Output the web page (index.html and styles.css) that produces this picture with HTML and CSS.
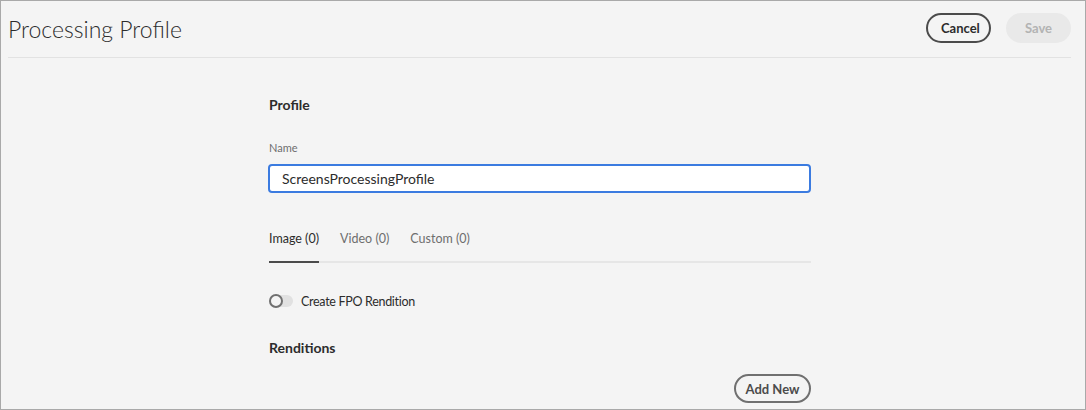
FILE: index.html
```html
<!DOCTYPE html>
<html>
<head>
<meta charset="utf-8">
<link rel="stylesheet" href="styles.css">
</head>
<body>
<div class="frame">
  <header class="header">
    <h1 class="title">Processing Profile</h1>
    <div class="actions">
      <button class="btn btn-outline">Cancel</button>
      <button class="btn btn-disabled">Save</button>
    </div>
  </header>
  <main class="content">
    <h2 class="section">Profile</h2>
    <label class="label">Name</label>
    <div class="input">ScreensProcessingProfile</div>
    <nav class="tabs">
      <span class="tab active">Image (0)</span>
      <span class="tab">Video (0)</span>
      <span class="tab">Custom (0)</span>
    </nav>
    <div class="toggle-row">
      <span class="switch"><span class="knob"></span></span>
      <span class="toggle-label">Create FPO Rendition</span>
    </div>
    <h2 class="section renditions">Renditions</h2>
    <div class="add-row">
      <button class="btn btn-secondary">Add New</button>
    </div>
  </main>
</div>
</body>
</html>
```
FILE: styles.css
```css
* { box-sizing: border-box; }
html, body { margin: 0; padding: 0; }
body {
  font-family: Lato, "Open Sans", sans-serif;
  color: #2c2c2c;
  background: #f4f4f4;
}
.frame {
  width: 1086px;
  height: 410px;
  border: 1px solid #a9a9a9;
  background: #f4f4f4;
  overflow: hidden;
}
.header {
  margin: 0 14px 0 7px;
  height: 57px;
  border-bottom: 1px solid #e2e2e2;
  display: flex;
  align-items: flex-start;
  justify-content: space-between;
}
.title {
  margin: 12px 0 0 0;
  font-size: 23px;
  font-weight: 300;
  color: #2c2c2c;
  line-height: 32px;
}
.actions {
  display: flex;
  gap: 15px;
  margin-top: 12px;
}
.btn {
  font-family: inherit;
  height: 30px;
  border-radius: 15px;
  font-size: 13px;
  font-weight: 700;
  padding: 0 13px;
  cursor: default;
}
.btn-outline {
  width: 65px;
  border: 2px solid #4b4b4b;
  background: transparent;
  color: #2c2c2c;
}
.btn-disabled {
  width: 65px;
  border: 2px solid #e9e9e9;
  background: #e9e9e9;
  color: #b3b3b3;
}
.btn-secondary {
  width: 77px;
  height: 29px;
  border: 2px solid #707070;
  background: transparent;
  color: #4b4b4b;
  padding: 0;
}
.content {
  width: 543px;
  margin-left: 267px;
  padding-top: 35px;
}
.section {
  margin: 0 0 0 1px;
  font-size: 14px;
  font-weight: 700;
  line-height: 24px;
  color: #2c2c2c;
}
.label {
  display: block;
  margin: 22px 0 0 1px;
  font-size: 11px;
  color: #6e6e6e;
  line-height: 18px;
}
.input {
  margin-top: 7px;
  height: 29px;
  border: 2px solid #3b7be0;
  border-radius: 4px;
  background: #fff;
  font-size: 14px;
  line-height: 25px;
  padding-left: 12px;
  color: #2c2c2c;
}
.tabs {
  margin-top: 31px;
  margin-left: 1px;
  display: flex;
  gap: 21px;
  border-bottom: 2px solid #e6e6e6;
  width: 542px;
}
.tab {
  font-size: 12.5px;
  color: #6e6e6e;
  line-height: 18px;
  padding: 6px 0 13px;
  margin-bottom: -2px;
}
.tab.active {
  color: #2c2c2c;
  border-bottom: 2px solid #4b4b4b;
}
.toggle-row {
  margin-top: 29px;
  margin-left: 1px;
  display: flex;
  align-items: center;
  gap: 8px;
  height: 18px;
}
.switch {
  width: 24px;
  height: 12px;
  border-radius: 6px;
  background: #e1e1e1;
  position: relative;
  display: inline-block;
}
.knob {
  position: absolute;
  left: 0;
  top: -1px;
  width: 14px;
  height: 14px;
  border-radius: 50%;
  background: #f4f4f4;
  border: 2px solid #707070;
}
.toggle-label {
  font-size: 12.5px;
  letter-spacing: -0.3px;
  color: #2c2c2c;
}
.renditions {
  margin-top: 26px;
}
.add-row {
  display: flex;
  justify-content: flex-end;
  margin-top: 14px;
}
```
